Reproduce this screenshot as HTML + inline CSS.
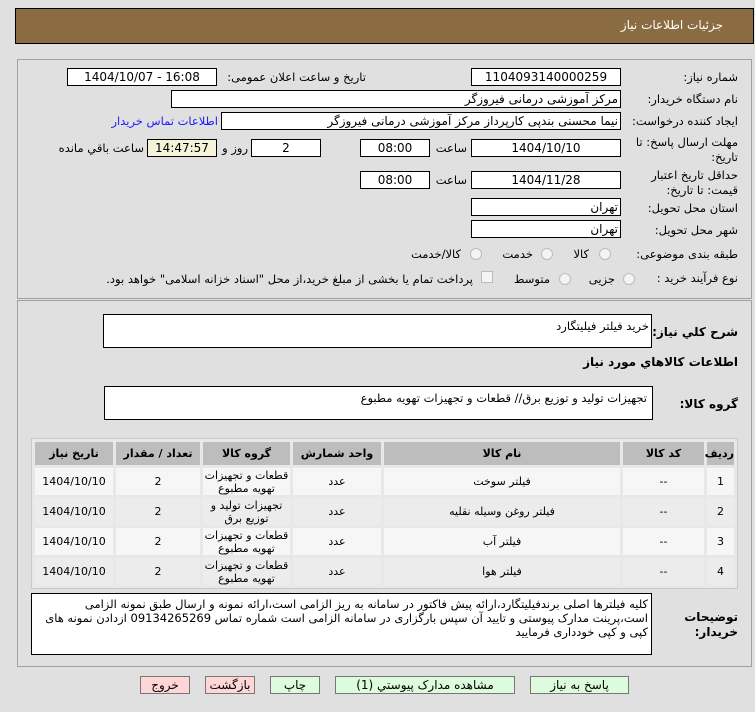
<!DOCTYPE html>
<html><head><meta charset="utf-8">
<style>
*{margin:0;padding:0;box-sizing:border-box}
body{width:755px;height:712px;background:#e0e0e0;font-family:"DejaVu Sans","Liberation Sans",sans-serif;font-size:11.5px;color:#000;position:relative;overflow:hidden}
.a{position:absolute;white-space:nowrap}
.box{position:absolute;background:#fff;border:1px solid #000;height:18px;line-height:16px;text-align:center;font-size:12px}
.r{direction:rtl;text-align:right;padding-right:2px}
.lbl{position:absolute;direction:rtl;text-align:right;white-space:nowrap}
.b{font-weight:bold}
.radio{position:absolute;width:12px;height:12px;border-radius:50%;border:1px solid #bbb;background:#f4f4f4}
table{position:absolute;left:31px;top:438px;width:707px;border:1px solid #c8c8c8;border-collapse:separate;border-spacing:3px;background:#e8e8e8;direction:rtl;font-size:11px;table-layout:fixed}
th{background:#bdbdbd;height:23px;font-weight:bold}
td{height:27px;text-align:center;line-height:13px}
tr:nth-child(odd) td{background:#ececec}
tr:nth-child(even) td{background:#f6f6f6}
.btn{position:absolute;top:676px;height:18px;border:1px solid #777;text-align:center;line-height:16px;font-size:12px;direction:rtl}
</style></head><body>
<div class="a" style="left:15px;top:8px;width:739px;height:36px;background:#8b6c42;border:1px solid #000"></div>
<div class="lbl" style="right:32px;top:18px;color:#fff;font-size:12px">جزئیات اطلاعات نیاز</div>

<div class="a" style="left:17px;top:59px;width:735px;height:240px;border:1px solid #a0a0a0"></div>
<div class="a" style="left:17px;top:300px;width:735px;height:367px;border:1px solid #a0a0a0"></div>

<div class="lbl" style="right:17px;top:70px">شماره نیاز:</div>
<div class="box" style="left:471px;top:68px;width:150px">1104093140000259</div>
<div class="lbl" style="right:389px;top:70px">تاریخ و ساعت اعلان عمومی:</div>
<div class="box" style="left:67px;top:68px;width:150px">1404/10/07 - 16:08</div>

<div class="lbl" style="right:17px;top:92px">نام دستگاه خریدار:</div>
<div class="box r" style="left:171px;top:90px;width:450px">مرکز آموزشی درمانی فیروزگر</div>

<div class="lbl" style="right:17px;top:114px">ایجاد کننده درخواست:</div>
<div class="box r" style="left:221px;top:112px;width:400px">نیما محسنی بندپی کارپرداز مرکز آموزشی درمانی فیروزگر</div>
<div class="lbl" style="right:537px;top:114px;color:#1a1aff">اطلاعات تماس خریدار</div>

<div class="lbl" style="right:17px;top:135px;line-height:15px">مهلت ارسال پاسخ: تا<br>تاریخ:</div>
<div class="box" style="left:471px;top:139px;width:150px">1404/10/10</div>
<div class="lbl" style="right:288px;top:141px">ساعت</div>
<div class="box" style="left:360px;top:139px;width:70px">08:00</div>
<div class="box" style="left:251px;top:139px;width:70px">2</div>
<div class="lbl" style="right:507px;top:141px">روز و</div>
<div class="box" style="left:147px;top:139px;width:70px;background:#f5f3d8">14:47:57</div>
<div class="lbl" style="right:611px;top:141px">ساعت باقي مانده</div>

<div class="lbl" style="right:17px;top:168px;line-height:15px">حداقل تاریخ اعتبار<br>قیمت: تا تاریخ:</div>
<div class="box" style="left:471px;top:171px;width:150px">1404/11/28</div>
<div class="lbl" style="right:288px;top:173px">ساعت</div>
<div class="box" style="left:360px;top:171px;width:70px">08:00</div>

<div class="lbl" style="right:17px;top:201px">استان محل تحویل:</div>
<div class="box r" style="left:471px;top:198px;width:150px">تهران</div>
<div class="lbl" style="right:17px;top:223px">شهر محل تحویل:</div>
<div class="box r" style="left:471px;top:220px;width:150px">تهران</div>

<div class="lbl" style="right:17px;top:247px">طبقه بندی موضوعی:</div>
<div class="radio" style="left:599px;top:248px"></div><div class="lbl" style="right:166px;top:247px">کالا</div>
<div class="radio" style="left:541px;top:248px"></div><div class="lbl" style="right:222px;top:247px">خدمت</div>
<div class="radio" style="left:470px;top:248px"></div><div class="lbl" style="right:294px;top:247px">کالا/خدمت</div>

<div class="lbl" style="right:17px;top:271px">نوع فرآیند خرید :</div>
<div class="radio" style="left:623px;top:273px"></div><div class="lbl" style="right:140px;top:272px">جزیی</div>
<div class="radio" style="left:559px;top:273px"></div><div class="lbl" style="right:205px;top:272px">متوسط</div>
<div class="a" style="left:481px;top:271px;width:12px;height:12px;border:1px solid #bbb;background:#f4f4f4"></div>
<div class="lbl" style="right:282px;top:272px">پرداخت تمام یا بخشی از مبلغ خرید،از محل "اسناد خزانه اسلامی" خواهد بود.</div>

<div class="lbl b" style="right:17px;top:325px;font-size:12px">شرح کلي نیاز:</div>
<div class="a r" style="left:103px;top:314px;width:549px;height:34px;background:#fff;border:1px solid #000;direction:rtl;padding-top:4px">خرید فیلتر فیلیتگارد</div>
<div class="lbl b" style="right:17px;top:355px;font-size:12px">اطلاعات کالاهاي مورد نیاز</div>
<div class="lbl b" style="right:17px;top:397px;font-size:12px">گروه کالا:</div>
<div class="a r" style="left:104px;top:386px;width:549px;height:34px;background:#fff;border:1px solid #000;direction:rtl;padding-top:4px;padding-right:5px">تجهیزات تولید و توزیع برق//  قطعات و تجهیزات تهویه مطبوع</div>

<table>
<colgroup><col style="width:27px"><col style="width:81px"><col style="width:236px"><col style="width:88px"><col style="width:87px"><col style="width:84px"><col></colgroup>
<tr><th>ردیف</th><th>کد کالا</th><th>نام کالا</th><th>واحد شمارش</th><th>گروه کالا</th><th>تعداد / مقدار</th><th>تاریخ نیاز</th></tr>
<tr><td>1</td><td>--</td><td>فیلتر سوخت</td><td>عدد</td><td>قطعات و تجهیزات<br>تهویه مطبوع</td><td>2</td><td>1404/10/10</td></tr>
<tr><td>2</td><td>--</td><td>فیلتر روغن وسیله نقلیه</td><td>عدد</td><td>تجهیزات تولید و<br>توزیع برق</td><td>2</td><td>1404/10/10</td></tr>
<tr><td>3</td><td>--</td><td>فیلتر آب</td><td>عدد</td><td>قطعات و تجهیزات<br>تهویه مطبوع</td><td>2</td><td>1404/10/10</td></tr>
<tr><td>4</td><td>--</td><td>فیلتر هوا</td><td>عدد</td><td>قطعات و تجهیزات<br>تهویه مطبوع</td><td>2</td><td>1404/10/10</td></tr>
</table>

<div class="lbl b" style="right:17px;top:610px;font-size:12px;line-height:15px">توضیحات<br>خریدار:</div>
<div class="a" style="left:31px;top:593px;width:621px;height:62px;background:#fff;border:1px solid #000;direction:rtl;text-align:right;white-space:normal;padding:3px 3px 0 4px;line-height:14px;font-size:11.5px">کلیه فیلترها اصلی برندفیلیتگارد،ارائه پیش فاکتور در سامانه به ریز الزامی است،ارائه نمونه و ارسال طبق نمونه الزامی است،پرینت مدارک پیوستی و تایید آن سپس بارگزاری در سامانه الزامی است شماره تماس 09134265269 ازدادن نمونه های کپی و کپی خودداری فرمایید</div>

<div class="btn" style="left:530px;width:99px;background:#ddfbdd">پاسخ به نیاز</div>
<div class="btn" style="left:335px;width:180px;background:#ddfbdd">مشاهده مدارک پیوستي (1)</div>
<div class="btn" style="left:270px;width:50px;background:#ddfbdd">چاپ</div>
<div class="btn" style="left:205px;width:50px;background:#ffd6d6">بازگشت</div>
<div class="btn" style="left:140px;width:50px;background:#ffd6d6">خروج</div>
</body></html>
